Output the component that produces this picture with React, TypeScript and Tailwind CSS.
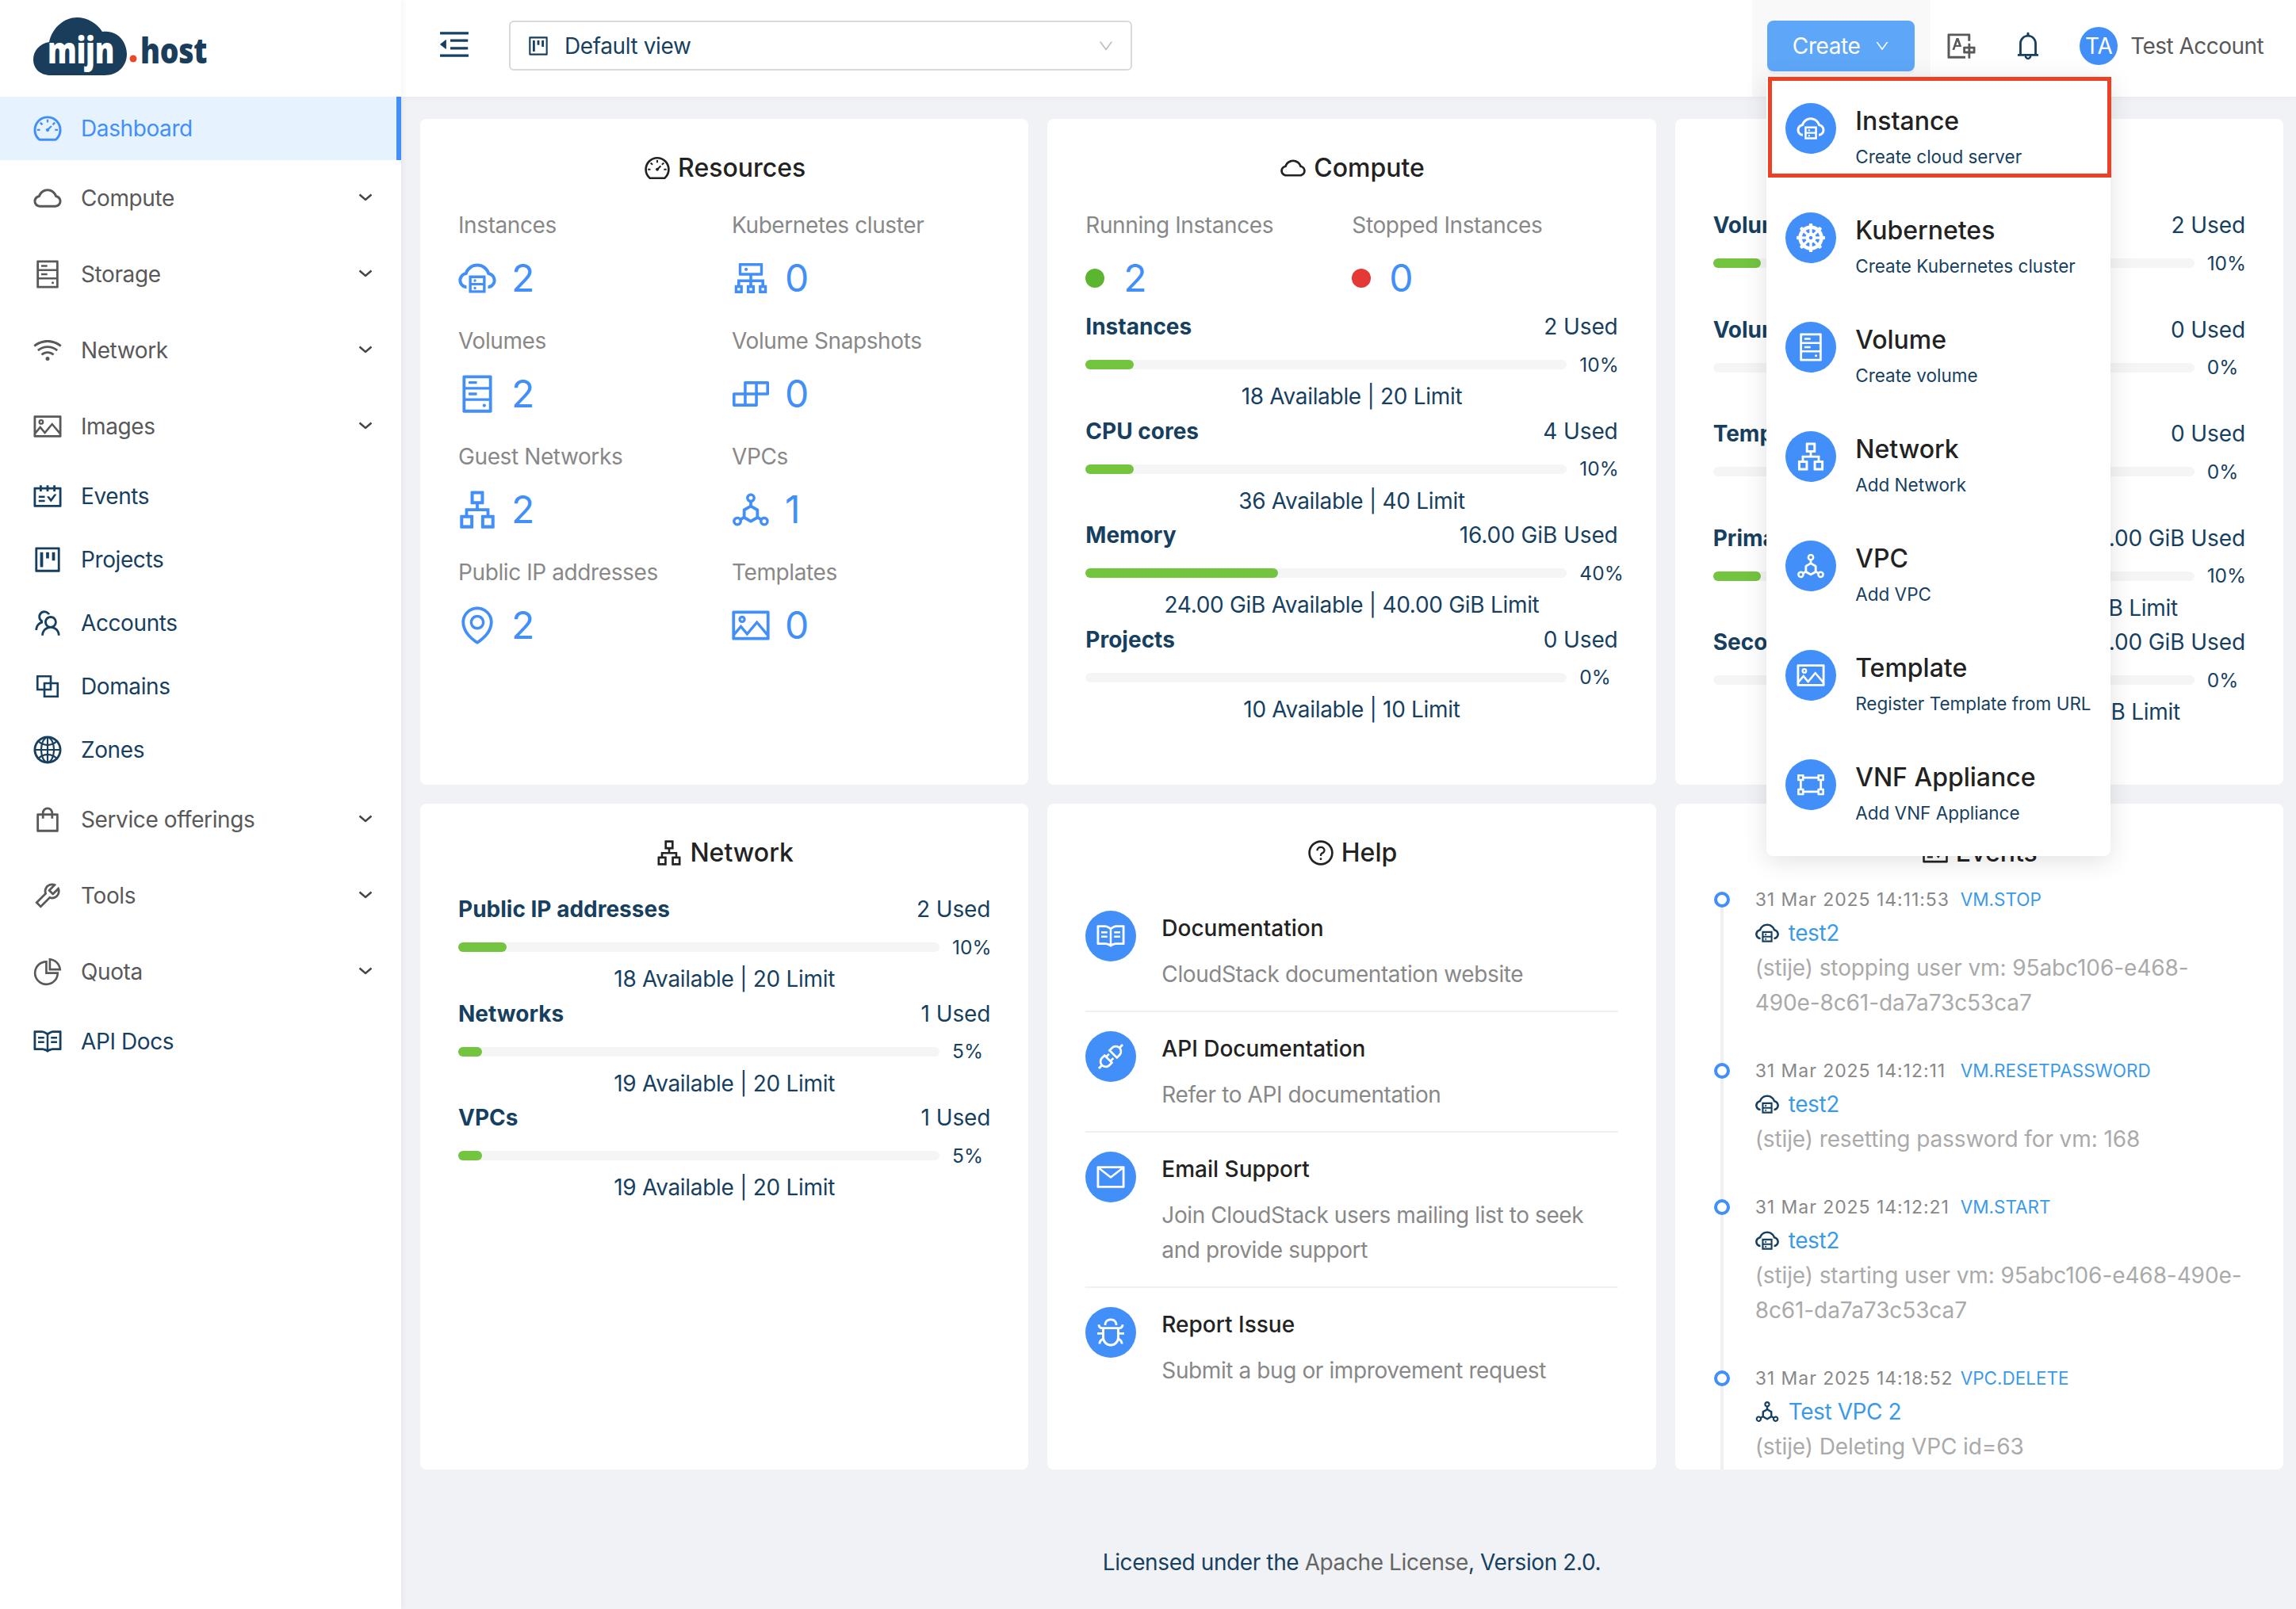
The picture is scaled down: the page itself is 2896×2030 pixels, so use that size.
import type { ReactNode } from 'react'
import type { IconType } from 'react-icons'
import { FaDharmachakra } from 'react-icons/fa'
import {
  AiOutlineApartment, AiOutlineApi, AiOutlineBell, AiOutlineBlock, AiOutlineBug, AiOutlineBuild,
  AiOutlineCloud, AiOutlineCloudServer, AiOutlineCluster, AiOutlineDashboard, AiOutlineDeploymentUnit,
  AiOutlineDown, AiOutlineEnvironment, AiOutlineGateway, AiOutlineGlobal, AiOutlineHdd, AiOutlineMail,
  AiOutlineMenuFold, AiOutlinePicture, AiOutlinePieChart, AiOutlineProject, AiOutlineQuestionCircle,
  AiOutlineRead, AiOutlineSchedule, AiOutlineShopping, AiOutlineTeam, AiOutlineTool, AiOutlineTranslation,
  AiOutlineWifi,
} from 'react-icons/ai'

const NAV: { label: string; icon: IconType; sub?: boolean; active?: boolean }[] = [
  { label: 'Dashboard', icon: AiOutlineDashboard, active: true },
  { label: 'Compute', icon: AiOutlineCloud, sub: true },
  { label: 'Storage', icon: AiOutlineHdd, sub: true },
  { label: 'Network', icon: AiOutlineWifi, sub: true },
  { label: 'Images', icon: AiOutlinePicture, sub: true },
  { label: 'Events', icon: AiOutlineSchedule },
  { label: 'Projects', icon: AiOutlineProject },
  { label: 'Accounts', icon: AiOutlineTeam },
  { label: 'Domains', icon: AiOutlineBlock },
  { label: 'Zones', icon: AiOutlineGlobal },
  { label: 'Service offerings', icon: AiOutlineShopping, sub: true },
  { label: 'Tools', icon: AiOutlineTool, sub: true },
  { label: 'Quota', icon: AiOutlinePieChart, sub: true },
  { label: 'API Docs', icon: AiOutlineRead },
]

const CREATE_ITEMS: { title: string; sub: string; icon: IconType; size?: number }[] = [
  { title: 'Instance', sub: 'Create cloud server', icon: AiOutlineCloudServer },
  { title: 'Kubernetes', sub: 'Create Kubernetes cluster', icon: FaDharmachakra, size: 36 },
  { title: 'Volume', sub: 'Create volume', icon: AiOutlineHdd },
  { title: 'Network', sub: 'Add Network', icon: AiOutlineApartment },
  { title: 'VPC', sub: 'Add VPC', icon: AiOutlineDeploymentUnit },
  { title: 'Template', sub: 'Register Template from URL', icon: AiOutlinePicture },
  { title: 'VNF Appliance', sub: 'Add VNF Appliance', icon: AiOutlineGateway },
]

const RESOURCES: { label: string; value: number; icon: IconType }[] = [
  { label: 'Instances', value: 2, icon: AiOutlineCloudServer },
  { label: 'Kubernetes cluster', value: 0, icon: AiOutlineCluster },
  { label: 'Volumes', value: 2, icon: AiOutlineHdd },
  { label: 'Volume Snapshots', value: 0, icon: AiOutlineBuild },
  { label: 'Guest Networks', value: 2, icon: AiOutlineApartment },
  { label: 'VPCs', value: 1, icon: AiOutlineDeploymentUnit },
  { label: 'Public IP addresses', value: 2, icon: AiOutlineEnvironment },
  { label: 'Templates', value: 0, icon: AiOutlinePicture },
]

type Usage = { name: string; used: string; pct: number; detail: string }

const COMPUTE: Usage[] = [
  { name: 'Instances', used: '2 Used', pct: 10, detail: '18 Available | 20 Limit' },
  { name: 'CPU cores', used: '4 Used', pct: 10, detail: '36 Available | 40 Limit' },
  { name: 'Memory', used: '16.00 GiB Used', pct: 40, detail: '24.00 GiB Available | 40.00 GiB Limit' },
  { name: 'Projects', used: '0 Used', pct: 0, detail: '10 Available | 10 Limit' },
]

const STORAGE: Usage[] = [
  { name: 'Volumes', used: '2 Used', pct: 10, detail: '18 Available | 20 Limit' },
  { name: 'Volume Snapshots', used: '0 Used', pct: 0, detail: '20 Available | 20 Limit' },
  { name: 'Templates', used: '0 Used', pct: 0, detail: '20 Available | 20 Limit' },
  { name: 'Primary Storage', used: '20.00 GiB Used', pct: 10, detail: '180.00 GiB Available | 200.00 GiB Limit' },
  { name: 'Secondary Storage', used: '0.00 GiB Used', pct: 0, detail: '200.00 GiB Available | 200.00 GiB Limit' },
]

const NETWORK: Usage[] = [
  { name: 'Public IP addresses', used: '2 Used', pct: 10, detail: '18 Available | 20 Limit' },
  { name: 'Networks', used: '1 Used', pct: 5, detail: '19 Available | 20 Limit' },
  { name: 'VPCs', used: '1 Used', pct: 5, detail: '19 Available | 20 Limit' },
]

const HELP: { title: string; desc: string; icon: IconType }[] = [
  { title: 'Documentation', desc: 'CloudStack documentation website', icon: AiOutlineRead },
  { title: 'API Documentation', desc: 'Refer to API documentation', icon: AiOutlineApi },
  { title: 'Email Support', desc: 'Join CloudStack users mailing list to seek and provide support', icon: AiOutlineMail },
  { title: 'Report Issue', desc: 'Submit a bug or improvement request', icon: AiOutlineBug },
]

const EVENTS: { time: string; action: string; name: string; icon: IconType; desc: string }[] = [
  { time: '31 Mar 2025 14:11:53', action: 'VM.STOP', name: 'test2', icon: AiOutlineCloudServer, desc: '(stije) stopping user vm: 95abc106-e468-490e-8c61-da7a73c53ca7' },
  { time: '31 Mar 2025 14:12:11', action: 'VM.RESETPASSWORD', name: 'test2', icon: AiOutlineCloudServer, desc: '(stije) resetting password for vm: 168' },
  { time: '31 Mar 2025 14:12:21', action: 'VM.START', name: 'test2', icon: AiOutlineCloudServer, desc: '(stije) starting user vm: 95abc106-e468-490e-8c61-da7a73c53ca7' },
  { time: '31 Mar 2025 14:18:52', action: 'VPC.DELETE', name: 'Test VPC 2', icon: AiOutlineDeploymentUnit, desc: '(stije) Deleting VPC id=63' },
]

function Logo() {
  return (
    <svg width="222" height="74" viewBox="0 0 222 74" className="block">
      <path d="M22 73C8 73 0 64 0 53C0 42 8 33 20 31C24 12 40 0 55 0C68 0 80 7 87 18C106 15 118 31 118 46C118 62 106 73 90 73Z" fill="#1a3d5c" />
      <text transform="translate(18 58) scale(0.8 1)" fill="#fff" fontFamily="Open Sans" fontWeight="800" fontSize="46">mijn</text>
      <circle cx="126" cy="52" r="4.5" fill="#e8492a" />
      <text transform="translate(135 58) scale(0.85 1)" fill="#1a3d5c" fontFamily="Open Sans" fontWeight="800" fontSize="44">host</text>
    </svg>
  )
}

function Chevron() {
  return (
    <svg width="18" height="12" viewBox="0 0 18 12" fill="none" stroke="#444" strokeWidth="2.4" className="ml-auto mr-[36px] -mt-[2px] shrink-0">
      <path d="M1.5 2.5L9 9L16.5 2.5" />
    </svg>
  )
}

function Sidebar() {
  return (
    <aside className="w-[506px] shrink-0 bg-white shadow-[2px_0_8px_rgba(29,35,41,0.05)] z-20">
      <div className="h-[122px] pl-[42px] pt-[22px]"><Logo /></div>
      <nav className="flex flex-col">
        {NAV.map(n => (
          <div
            key={n.label}
            className={`h-[80px] flex items-center pl-[40px] text-[28px] ${n.sub ? 'my-[8px] text-[#595959]' : 'text-[#173f5f]'} ${n.active ? 'bg-[#e6f3ff] border-r-[6px] border-[#438ffa] text-[#438ffa]' : ''}`}
          >
            <n.icon size={40} className="shrink-0 mr-[22px]" />
            <span>{n.label}</span>
            {n.sub && <Chevron />}
          </div>
        ))}
      </nav>
    </aside>
  )
}

function CreateMenu() {
  return (
    <div className="absolute left-[18px] top-[97px] w-[434px] h-[983px] bg-white rounded-b-[8px] shadow-[0_6px_32px_rgba(0,0,0,0.12)] z-50">
      {CREATE_ITEMS.map(it => (
        <div key={it.title} className="h-[138px] flex pl-[24px] pt-[33px]">
          <span className="w-[64px] h-[64px] rounded-full bg-[#438ffa] text-white flex items-center justify-center shrink-0">
            <it.icon size={it.size ?? 40} />
          </span>
          <div className="ml-[24px]">
            <div className="h-[46px] leading-[46px] text-[32px] font-medium tracking-normal text-[#222]">{it.title}</div>
            <div className="h-[44px] leading-[44px] text-[22.5px] tracking-normal text-[#173f5f] whitespace-nowrap">{it.sub}</div>
          </div>
        </div>
      ))}
      <div className="absolute left-[2px] top-0 w-[433px] h-[127px] border-[5px] border-[#ec4124]" />
    </div>
  )
}

function Header() {
  return (
    <header className="h-[122px] shrink-0 bg-white shadow-[0_2px_8px_rgba(0,21,41,0.03)] flex items-center pl-[44px] pr-[41px] text-[#173f5f] relative z-10">
      <AiOutlineMenuFold size={46} className="-mt-[10px]" />
      <div className="ml-[46px] w-[786px] h-[63px] -mt-[7px] border-2 border-[#d9d9d9] rounded-[6px] flex items-center pl-[20px] pr-[20px] text-[28px]">
        <AiOutlineProject size={30} />
        <span className="ml-[18px]">Default view</span>
        <AiOutlineDown size={22} className="ml-auto text-[#bfbfbf]" />
      </div>
      <div className="ml-auto relative h-[122px] w-[225px] bg-[#f9f9f9] flex items-center pl-[19px]">
        <button className="w-[186px] h-[64px] -mt-[6px] rounded-[8px] bg-[#5ea6f8] text-white text-[28px] flex items-center justify-center shadow-[0_4px_0_rgba(0,0,0,0.03)]">
          <span>Create</span>
          <AiOutlineDown size={20} className="ml-[17px]" />
        </button>
        <CreateMenu />
      </div>
      <AiOutlineTranslation size={40} className="ml-[19px] -mt-[6px] text-[#595959]" />
      <AiOutlineBell size={40} className="ml-[44px] -mt-[6px]" />
      <span className="ml-[45px] -mt-[6px] w-[48px] h-[48px] rounded-full bg-[#438ffa] text-white text-[28px] flex items-center justify-center">TA</span>
      <span className="ml-[16px] -mt-[6px] text-[28px] tracking-[-0.55px] text-[#595959]">Test Account</span>
    </header>
  )
}

function Card({ title, icon: Icon, children }: { title: string; icon: IconType; children: ReactNode }) {
  return (
    <section className="bg-white rounded-[8px] px-[48px] pt-[40px] overflow-hidden relative">
      <h2 className="h-[44px] flex items-center justify-center text-[#222] text-[32px] font-medium tracking-normal">
        <Icon size={36} className="mr-[8px]" />
        {title}
      </h2>
      {children}
    </section>
  )
}

function UsageList({ rows }: { rows: Usage[] }) {
  return (
    <div>
      {rows.map(r => (
        <div key={r.name} className="h-[131.6px] text-[28px] text-[#173f5f]">
          <div className="h-[44px] flex items-center justify-between whitespace-nowrap">
            <span className="font-bold tracking-normal">{r.name}</span>
            <span className="tracking-[-0.1px]">{r.used}</span>
          </div>
          <div className="h-[28px] mt-[12px] flex items-center">
            <div className="w-[607px] h-[12px] rounded-full bg-[#f5f5f5] shrink-0">
              <div className="h-full rounded-full bg-[#73c43f]" style={{ width: `${r.pct}%` }} />
            </div>
            <span className="ml-[16px] text-[24.5px] tracking-normal whitespace-nowrap">{r.pct}%</span>
          </div>
          <div className="h-[44px] mt-[4px] leading-[44px] text-center tracking-[-0.3px] whitespace-nowrap">{r.detail}</div>
        </div>
      ))}
    </div>
  )
}

function Stat({ label, children }: { label: string; children: ReactNode }) {
  return (
    <div>
      <div className="h-[44px] leading-[44px] text-[28px] text-[#888]">{label}</div>
      <div className="h-[78px] mt-[6px] flex items-center text-[48px] tracking-normal text-[#438ffa]">{children}</div>
    </div>
  )
}

function ResourcesCard() {
  return (
    <Card title="Resources" icon={AiOutlineDashboard}>
      <div className="mt-[28px] grid grid-cols-[345px_1fr] gap-y-[18px]">
        {RESOURCES.map(r => (
          <Stat key={r.label} label={r.label}>
            <r.icon size={54} className="-ml-[3px] mr-[16px]" />
            {r.value}
          </Stat>
        ))}
      </div>
    </Card>
  )
}

function ComputeCard() {
  return (
    <Card title="Compute" icon={AiOutlineCloud}>
      <div className="mt-[28px] grid grid-cols-[336px_1fr]">
        <Stat label="Running Instances">
          <span className="w-[24px] h-[24px] rounded-full bg-[#5cb531] mr-[24px]" />2
        </Stat>
        <Stat label="Stopped Instances">
          <span className="w-[24px] h-[24px] rounded-full bg-[#e53935] mr-[23px]" />0
        </Stat>
      </div>
      <UsageList rows={COMPUTE} />
    </Card>
  )
}

function HelpCard() {
  return (
    <Card title="Help" icon={AiOutlineQuestionCircle}>
      <div className="mt-[51px]">
        {HELP.map((h, i) => (
          <div key={h.title} className={`flex pb-[24px] mb-[24px] ${i < HELP.length - 1 ? 'border-b-2 border-[#f0f0f0]' : ''}`}>
            <span className="w-[64px] h-[64px] rounded-full bg-[#438ffa] text-white flex items-center justify-center shrink-0">
              <h.icon size={40} />
            </span>
            <div className="ml-[32px]">
              <div className="h-[44px] leading-[44px] text-[28px] font-medium tracking-normal text-[#222]">{h.title}</div>
              <div className="mt-[14px] leading-[44px] text-[28px] text-[#888]">{h.desc}</div>
            </div>
          </div>
        ))}
      </div>
    </Card>
  )
}

function EventsCard() {
  return (
    <Card title="Events" icon={AiOutlineSchedule}>
      <ul className="mt-[16px]">
        {EVENTS.map(e => (
          <li key={e.time} className="relative pl-[53px] pb-[43px]">
            <span className="absolute left-[9px] top-[20px] bottom-[-20px] w-[4px] bg-[#f0f0f0]" />
            <span className="absolute left-[1px] top-[11px] w-[20px] h-[20px] rounded-full border-[4px] border-[#438ffa] bg-white" />
            <div className="h-[42px] leading-[42px] flex whitespace-nowrap">
              <span className="w-[259px] text-[23px] tracking-[0.95px] text-[#888]">{e.time}</span>
              <span className="text-[22.5px] tracking-normal text-[#3b9ae8]">{e.action}</span>
            </div>
            <div className="h-[42px] flex items-center text-[28px] text-[#3b9ae8]">
              <e.icon size={34} className="text-[#173f5f] -ml-[2px] mr-[10px]" />
              {e.name}
            </div>
            <div className="mt-[1px] leading-[44px] text-[28px] tracking-[-0.1px] text-[#aaa]">{e.desc}</div>
          </li>
        ))}
      </ul>
    </Card>
  )
}

export default function App() {
  return (
    <div className="flex h-[2030px] overflow-hidden bg-[#f0f2f5] font-[Inter,sans-serif] tracking-[-0.4px]">
      <Sidebar />
      <div className="flex-1 flex flex-col min-w-0">
        <Header />
        <main className="pt-[28px] pl-[24px] pr-[16px]">
          <div className="grid grid-cols-3 auto-rows-[840px] gap-[24px]">
            <ResourcesCard />
            <ComputeCard />
            <Card title="Storage" icon={AiOutlineHdd}>
              <div className="mt-[28px]"><UsageList rows={STORAGE} /></div>
            </Card>
            <Card title="Network" icon={AiOutlineApartment}>
              <div className="mt-[27px]"><UsageList rows={NETWORK} /></div>
            </Card>
            <HelpCard />
            <EventsCard />
          </div>
          <footer className="mt-[95px] h-[44px] leading-[44px] text-center text-[28px] text-[#173f5f]">
            Licensed under the <span className="text-[#666]">Apache License</span>, Version 2.0.
          </footer>
        </main>
      </div>
    </div>
  )
}
